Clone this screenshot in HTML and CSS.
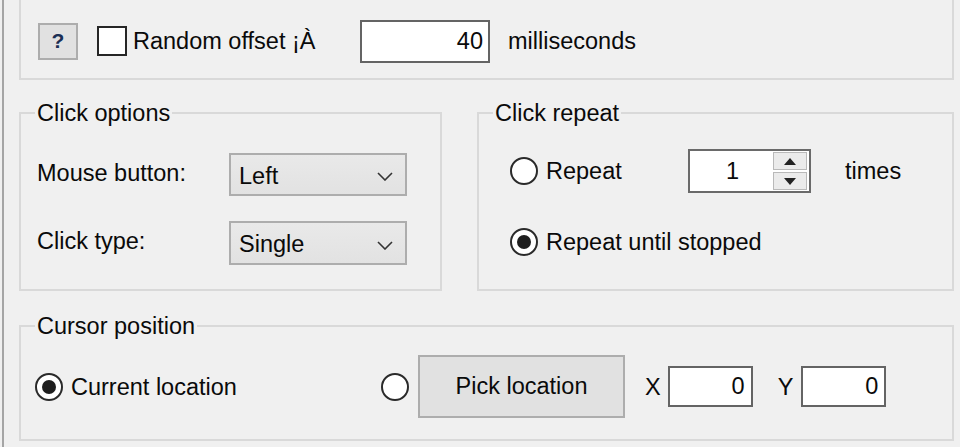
FILE: index.html
```html
<!DOCTYPE html>
<html lang="en">
<head>
<meta charset="utf-8">
<title>Click options</title>
<link rel="stylesheet" href="styles.css">
</head>
<body>
<div class="window">
  <div class="group group-top">
    <button class="btn help-btn">?</button>
    <label class="check"><span class="check-box"></span>Random offset ¡À</label>
    <div class="field field-offset">40</div>
    <span class="unit">milliseconds</span>
  </div>

  <div class="mid">
    <fieldset class="group options">
      <legend>Click options</legend>
      <div class="opt-grid">
        <span class="opt-label">Mouse button:</span>
        <div class="combo"><span>Left</span><svg class="chev" viewBox="0 0 16 9" width="16" height="9"><path d="M1 1 L8 8 L15 1" fill="none" stroke="#333" stroke-width="1.6"/></svg></div>
        <span class="opt-label">Click type:</span>
        <div class="combo"><span>Single</span><svg class="chev" viewBox="0 0 16 9" width="16" height="9"><path d="M1 1 L8 8 L15 1" fill="none" stroke="#333" stroke-width="1.6"/></svg></div>
      </div>
    </fieldset>

    <fieldset class="group repeat">
      <legend>Click repeat</legend>
      <div class="repeat-row">
        <label class="radio-label rep-once"><span class="radio"></span>Repeat</label>
        <div class="spin">
          <span class="spin-value">1</span>
          <div class="spin-btns">
            <span class="spin-btn"><svg viewBox="0 0 12 7" width="12" height="7"><path d="M0 7 L6 0 L12 7 Z" fill="#222"/></svg></span>
            <span class="spin-btn"><svg viewBox="0 0 12 7" width="12" height="7"><path d="M0 0 L6 7 L12 0 Z" fill="#222"/></svg></span>
          </div>
        </div>
        <span class="unit times">times</span>
      </div>
      <label class="radio-label rep-until"><span class="radio checked"></span>Repeat until stopped</label>
    </fieldset>
  </div>

  <fieldset class="group cursor">
    <legend>Cursor position</legend>
    <div class="cursor-row">
      <label class="radio-label cur-loc"><span class="radio checked"></span>Current location</label>
      <span class="radio"></span>
      <button class="btn pick-btn">Pick location</button>
      <span class="axis">X</span>
      <div class="field field-xy">0</div>
      <span class="axis axis-y">Y</span>
      <div class="field field-xy">0</div>
    </div>
  </fieldset>
</div>
</body>
</html>
```

FILE: styles.css
```css
* { box-sizing: border-box; }

html, body {
  margin: 0;
  padding: 0;
  background: #f0f0f0;
}

body {
  font-family: "Liberation Sans", Arial, sans-serif;
  font-size: 23.5px;
  line-height: 26px;
  color: #0a0a0a;
  overflow: hidden;
}

.window {
  margin-left: 2px;
  border-left: 2px solid #a5a5a5;
  height: 447px;
  padding: 0 6px 0 15px;
}

.group {
  border: 2px solid #d9d9d9;
  margin: 0;
  min-width: 0;
}

legend {
  padding: 0 2px;
  line-height: 26px;
  font-size: 23.5px;
}

/* top group */
.group-top {
  border-top: none;
  height: 80px;
  padding: 4px 0 0 17px;
  display: flex;
  align-items: center;
}

.btn {
  font-family: inherit;
  color: #0a0a0a;
  background: #e1e1e1;
  border: 2px solid #adadad;
  padding: 0;
  margin: 0;
}

.help-btn {
  width: 40px;
  height: 37px;
  font-size: 21px;
  font-weight: bold;
  color: #1b2f55;
}

.check {
  display: flex;
  align-items: center;
  margin-left: 19px;
  width: 263px;
}

.check-box {
  width: 30px;
  height: 30px;
  border: 2px solid #262626;
  background: #fff;
  margin-right: 6px;
  flex: none;
}

.field {
  background: #fff;
  border: 2px solid #646464;
  text-align: right;
  padding-right: 5px;
}

.field-offset {
  width: 130px;
  height: 43px;
  line-height: 39px;
}

.unit {
  margin-left: 18px;
}

/* middle row */
.mid {
  display: flex;
  gap: 35px;
  margin-top: 20px;
}

.options {
  width: 423px;
  flex: none;
  padding: 27px 0 24px 16px;
}

.options legend { margin-left: -2px; }

.opt-grid {
  display: grid;
  grid-template-columns: 192px 178px;
  grid-template-rows: 43px 44px;
  row-gap: 25px;
  align-items: center;
}

.opt-label { margin-top: -4px; }

.combo {
  height: 100%;
  border: 2px solid #adadad;
  background: linear-gradient(#e9e9e9, #e2e2e2);
  display: flex;
  align-items: center;
  justify-content: space-between;
  padding: 2px 12px 0 8px;
}

.chev { margin-top: 2px; }

.repeat {
  flex: 1;
  padding: 23px 0 0 31px;
}

.repeat legend { margin-left: -17px; }

.repeat-row {
  display: flex;
  align-items: center;
  height: 44px;
}

.radio-label {
  display: flex;
  align-items: center;
}

.radio {
  width: 28px;
  height: 28px;
  border: 2px solid #2a2a2a;
  border-radius: 50%;
  background: #fff;
  flex: none;
  display: flex;
  align-items: center;
  justify-content: center;
}

.radio-label .radio { margin-right: 8px; }

.radio.checked::after {
  content: "";
  width: 14px;
  height: 14px;
  border-radius: 50%;
  background: #1e1e1e;
}

.rep-once { width: 178px; }

.spin {
  width: 123px;
  height: 44px;
  border: 2px solid #6a6a6a;
  background: #fff;
  display: flex;
  align-items: stretch;
}

.spin-value {
  flex: 1;
  text-align: center;
  line-height: 40px;
  padding-left: 2px;
}

.spin-btns {
  width: 36px;
  display: flex;
  flex-direction: column;
  gap: 2px;
  padding: 1px 2px 1px 0;
}

.spin-btn {
  flex: 1;
  border: 1px solid #b9b9b9;
  background: #ebebeb;
  display: flex;
  align-items: center;
  justify-content: center;
}

.times { margin-left: 34px; }

.rep-until {
  margin-top: 35px;
  height: 28px;
}

/* cursor position */
.cursor {
  margin-top: 22px;
  padding: 16px 0 21px 14px;
}

.cursor-row {
  display: flex;
  align-items: center;
  height: 63px;
}

.cur-loc { width: 346px; }

.pick-btn {
  width: 207px;
  height: 63px;
  margin-left: 9px;
  font-size: 23.5px;
}

.axis { margin-left: 20px; margin-right: 7px; }
.axis-y { margin-left: 25px; margin-right: 8px; }

.field-xy {
  width: 85px;
  height: 41px;
  line-height: 37px;
  padding-right: 6px;
}
```
